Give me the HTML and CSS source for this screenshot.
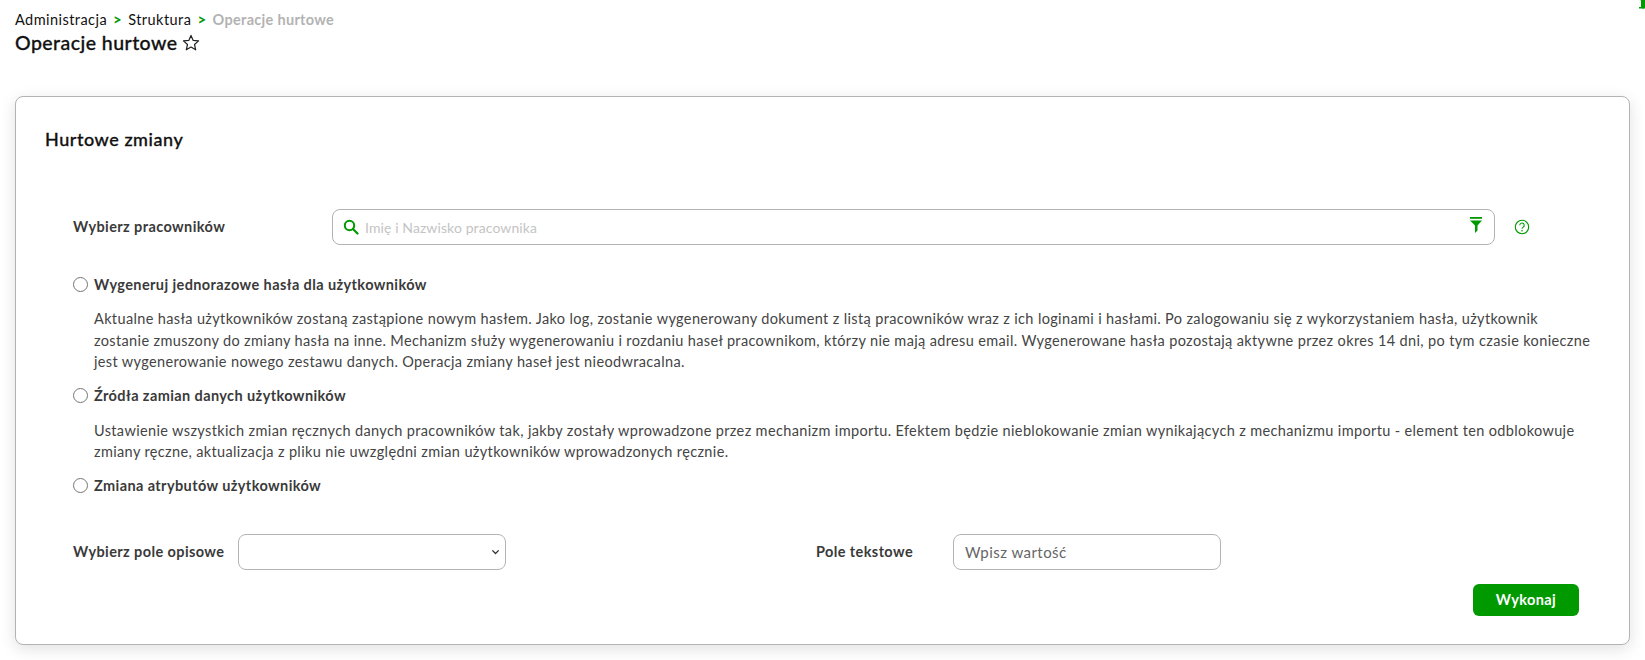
FILE: index.html
```html
<!DOCTYPE html>
<html lang="pl">
<head>
<meta charset="utf-8">
<title>Operacje hurtowe</title>
<link rel="stylesheet" href="styles.css">
</head>
<body>
<svg class="corner-funnel" viewBox="0 0 16 16" aria-hidden="true"><path d="M2 -6H14L10 1V7L8 9L6 7V1Z" fill="#009900"/><rect x="4" y="7" width="6" height="1.5" fill="#009900"/></svg>
<header class="page-head">
  <nav class="crumbs">
    <span>Administracja</span><span class="sep">&gt;</span><span>Struktura</span><span class="sep">&gt;</span><span class="current">Operacje hurtowe</span>
  </nav>
  <h1 class="title">Operacje hurtowe
    <svg class="star" viewBox="0 0 18 18" aria-hidden="true"><path d="M9 1.4l2.2 5 5.4.5-4.1 3.6 1.2 5.3L9 13l-4.7 2.8 1.2-5.3L1.4 6.900l5.400-.5z" fill="none" stroke="#222" stroke-width="1.200" stroke-linejoin="round"/></svg>
  </h1>
</header>
<main class="card">
  <h2 class="card-title">Hurtowe zmiany</h2>
  <div class="pick-row">
    <label class="field-label pick-label">Wybierz pracowników</label>
    <div class="search">
      <svg class="search-icon" viewBox="0 0 16 16" aria-hidden="true"><circle cx="6.500" cy="6.500" r="4.700" fill="none" stroke="#009900" stroke-width="2"/><path d="M10 10l4.500 4.500" stroke="#009900" stroke-width="2.200" stroke-linecap="round"/></svg>
      <span class="search-hint">Imię i Nazwisko pracownika</span>
      <svg class="funnel" viewBox="0 0 12 16" aria-hidden="true"><rect x="0" y="0" width="12" height="1.800" fill="#009900"/><path d="M0 3.500H12L7.500 8.500V13.500L5 16V8.500Z" fill="#009900"/></svg>
    </div>
    <svg class="help" viewBox="0 0 16 16" aria-hidden="true"><circle cx="8" cy="8" r="6.700" fill="none" stroke="#009900" stroke-width="1.100"/><path d="M5.800 6.300a2.200 2.200 0 1 1 3.400 1.800c-.8.500-1.200.9-1.200 1.700" fill="none" stroke="#009900" stroke-width="1.100"/><circle cx="8" cy="11.800" r=".8" fill="#009900"/></svg>
  </div>
  <div class="option">
    <label class="radio-line"><span class="radio"></span><span>Wygeneruj jednorazowe hasła dla użytkowników</span></label>
    <p class="desc">Aktualne hasła użytkowników zostaną zastąpione nowym hasłem. Jako log, zostanie wygenerowany dokument z listą pracowników wraz z ich loginami i hasłami. Po zalogowaniu się z wykorzystaniem hasła, użytkownik<br>zostanie zmuszony do zmiany hasła na inne. Mechanizm służy wygenerowaniu i rozdaniu haseł pracownikom, którzy nie mają adresu email. Wygenerowane hasła pozostają aktywne przez okres 14 dni, po tym czasie konieczne<br>jest wygenerowanie nowego zestawu danych. Operacja zmiany haseł jest nieodwracalna.</p>
  </div>
  <div class="option">
    <label class="radio-line"><span class="radio"></span><span>Źródła zamian danych użytkowników</span></label>
    <p class="desc">Ustawienie wszystkich zmian ręcznych danych pracowników tak, jakby zostały wprowadzone przez mechanizm importu. Efektem będzie nieblokowanie zmian wynikających z mechanizmu importu - element ten odblokowuje<br>zmiany ręczne, aktualizacja z pliku nie uwzględni zmian użytkowników wprowadzonych ręcznie.</p>
  </div>
  <div class="option">
    <label class="radio-line"><span class="radio"></span><span>Zmiana atrybutów użytkowników</span></label>
  </div>
  <div class="attr-row">
    <div class="attr-left">
      <label class="field-label">Wybierz pole opisowe</label>
      <div class="select">
        <svg class="chev" viewBox="0 0 10 6" aria-hidden="true"><path d="M1.500 1.200L5 4.700 8.500 1.200" fill="none" stroke="#333" stroke-width="1.500"/></svg>
      </div>
    </div>
    <div class="attr-right">
      <label class="field-label text-label">Pole tekstowe</label>
      <div class="text-input">Wpisz wartość</div>
    </div>
  </div>
  <div class="actions"><button class="btn" type="button">Wykonaj</button></div>
</main>
</body>
</html>
```
FILE: styles.css
```css
* { box-sizing: border-box; }
html, body { margin: 0; height: 660px; overflow: hidden; background: #fff; }
body {
  font-family: "Lato", "Noto Sans", sans-serif;
  color: #3a3a3a;
  padding: 0 15px;
  position: relative;
}
.corner-funnel { position: absolute; top: 0; right: -6px; width: 16px; height: 16px; }
.page-head { padding-top: 11px; height: 96px; }
.crumbs { display: flex; align-items: center; font-size: 14.500px; letter-spacing: .45px; line-height: 17px; color: #111; }
.sep { color: #009900; margin: 0 6px; font-weight: 700; font-size: 15px; }
.current { color: #b3b3b3; font-weight: 700; letter-spacing: .3px; }
.title { margin: 3px 0 0; font-size: 19.500px; letter-spacing: .45px; line-height: 24px; font-weight: 500; color: #111; -webkit-text-stroke: .3px #111; display: flex; align-items: center; gap: 4px; }
.star { width: 18px; height: 18px; }
.card {
  height: 549px;
  border: 1px solid #b3b3b3;
  border-radius: 8px;
  box-shadow: 0 4px 16px rgba(0, 0, 0, .12);
  background: #fff;
  padding: 30px 50px 0 29px;
}
.card-title { margin: 0; font-size: 18px; letter-spacing: .55px; line-height: 24px; font-weight: 500; color: #111; -webkit-text-stroke: .3px #111; }
.pick-row { display: flex; align-items: center; margin: 58px 0 0 28px; height: 36px; }
.field-label { font-size: 14.500px; font-weight: 700; letter-spacing: .4px; color: #3a3a3a; }
.pick-label { width: 259px; flex: none; position: relative; top: -1px; }
.search {
  flex: none; width: 1163px; height: 36px;
  border: 1px solid #b3b3b3; border-radius: 8px;
  display: flex; align-items: center; padding: 0 12px 0 10px;
  font-size: 14px;
}
.search-icon { width: 16px; height: 16px; flex: none; }
.search-hint { margin-left: 6px; color: #c4c4c4; flex: 1; letter-spacing: .1px; }
.funnel { width: 12px; height: 16px; flex: none; position: relative; top: -2px; }
.help { width: 16px; height: 16px; margin-left: 19px; flex: none; }
.option { margin-left: 28px; }
.radio-line { display: flex; align-items: center; height: 22px; gap: 6px; font-size: 14.500px; font-weight: 700; letter-spacing: .4px; color: #3a3a3a; }
.radio { width: 15px; height: 15px; border: 1px solid #767676; border-radius: 50%; flex: none; background: #fff; }
.pick-row + .option { margin-top: 28px; }
.desc { margin: 13px 0 0 21px; font-size: 14.500px; letter-spacing: .36px; line-height: 21.500px; color: #444; white-space: nowrap; }
.option + .option { margin-top: 12px; }
.attr-row { display: flex; margin: 37px 0 0 28px; height: 36px; }
.attr-left { display: flex; align-items: center; width: 743px; flex: none; }
.attr-left .field-label { width: 165px; flex: none; }
.select { width: 268px; height: 36px; border: 1px solid #b3b3b3; border-radius: 8px; display: flex; align-items: center; justify-content: flex-end; padding-right: 5px; }
.chev { width: 9px; height: 6px; }
.attr-right { display: flex; align-items: center; }
.text-label { width: 137px; flex: none; }
.text-input { width: 268px; height: 36px; border: 1px solid #b3b3b3; border-radius: 8px; padding: 0 11px; display: flex; align-items: center; font-size: 15px; letter-spacing: .45px; color: #666; }
.actions { display: flex; justify-content: flex-end; margin-top: 14px; }
.btn { width: 106px; height: 32px; border: 0; border-radius: 6px; background: #009900; color: #fff; font: 700 14.500px "Lato", sans-serif; letter-spacing: .4px; }
```
